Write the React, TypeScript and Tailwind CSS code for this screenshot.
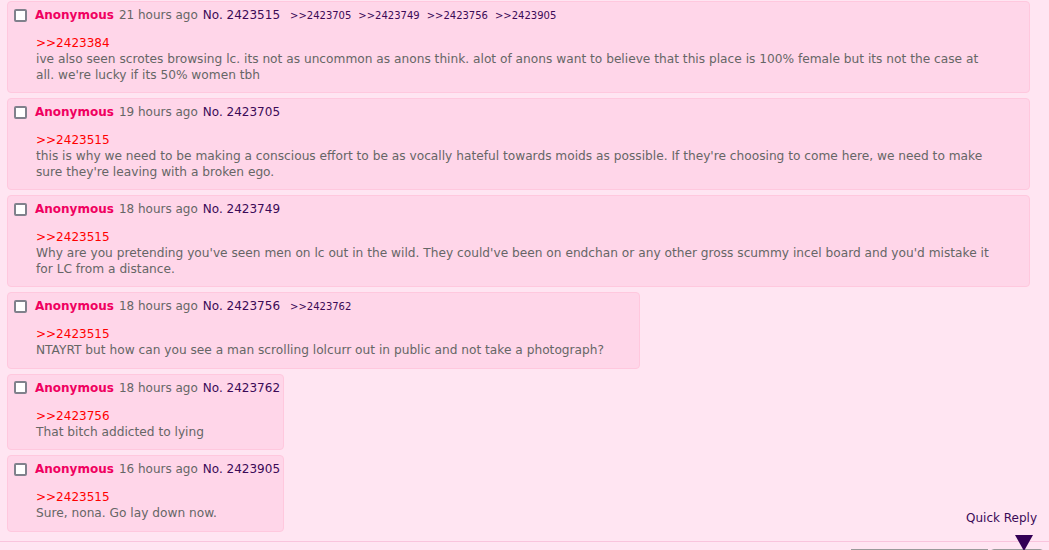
import React from "react";

type Post = {
  ago: string;
  no: string;
  replies: string[];
  quote: string;
  body: string;
};

const posts: Post[] = [
  {
    ago: "21 hours ago",
    no: "2423515",
    replies: ["2423705", "2423749", "2423756", "2423905"],
    quote: "2423384",
    body: "ive also seen scrotes browsing lc. its not as uncommon as anons think. alot of anons want to believe that this place is 100% female but its not the case at all. we're lucky if its 50% women tbh",
  },
  {
    ago: "19 hours ago",
    no: "2423705",
    replies: [],
    quote: "2423515",
    body: "this is why we need to be making a conscious effort to be as vocally hateful towards moids as possible. If they're choosing to come here, we need to make sure they're leaving with a broken ego.",
  },
  {
    ago: "18 hours ago",
    no: "2423749",
    replies: [],
    quote: "2423515",
    body: "Why are you pretending you've seen men on lc out in the wild. They could've been on endchan or any other gross scummy incel board and you'd mistake it for LC from a distance.",
  },
  {
    ago: "18 hours ago",
    no: "2423756",
    replies: ["2423762"],
    quote: "2423515",
    body: "NTAYRT but how can you see a man scrolling lolcurr out in public and not take a photograph?",
  },
  {
    ago: "18 hours ago",
    no: "2423762",
    replies: [],
    quote: "2423756",
    body: "That bitch addicted to lying",
  },
  {
    ago: "16 hours ago",
    no: "2423905",
    replies: [],
    quote: "2423515",
    body: "Sure, nona. Go lay down now.",
  },
];

function PostBox({ post }: { post: Post }) {
  return (
    <div className="inline-block max-w-[1023px] bg-[#ffd6e9] border border-[#ffc8de] rounded-[4px] pl-[6px] pr-[3px] pt-[3px] pb-[9px]">
      <div className="flex items-center h-[20px] whitespace-nowrap">
        <span className="w-[13px] h-[13px] bg-white border-2 border-[#80818c] rounded-[2px] shrink-0" />
        <span className="ml-[8px] font-bold text-[#f0005f]">Anonymous</span>
        <span className="ml-[5px] text-[#666666]">{post.ago}</span>
        <span className="ml-[5px] text-[#3b0a57]">No. {post.no}</span>
        {post.replies.map((r, i) => (
          <span
            key={r}
            className={`text-[10px] text-[#3b0a57] ${i === 0 ? "ml-[10px]" : "ml-[7px]"}`}
          >
            &gt;&gt;{r}
          </span>
        ))}
      </div>
      <div className="ml-[22px] mr-[32px] mt-[10px]">
        <div className="text-[#ff0000] leading-[17px]">&gt;&gt;{post.quote}</div>
        <div className="text-[#666666] text-[12.2px] leading-[15.5px]">{post.body}</div>
      </div>
    </div>
  );
}

export default function App() {
  const last = posts[posts.length - 1];
  return (
    <div className="relative h-[550px] overflow-hidden bg-[#ffe5f2] font-['DejaVu_Sans',Verdana,sans-serif] text-[12px]">
      <div className="flex flex-col gap-[5px] pl-[7px] pt-[1px]">
        {posts.slice(0, -1).map((p) => (
          <div key={p.no}>
            <PostBox post={p} />
          </div>
        ))}
        <div className="flex justify-between items-end">
          <PostBox post={last} />
          <span className="mr-[12px] mb-[5px] text-[#3b0a57]">Quick Reply</span>
        </div>
      </div>
      <div className="mt-[9px] border-t border-[#f9c4dd]" />
      <div className="flex justify-end gap-[2px] pr-[5px] mt-[7px]">
        <div className="w-[137px] h-[20px] border border-[#9a9a9a] bg-white" />
        <div className="w-[54px] h-[20px] border border-[#9a9a9a] rounded-t-[4px] bg-[#f2eef2]" />
      </div>
      <svg
        className="absolute left-[1015px] top-[535px]"
        width="18"
        height="16"
        viewBox="0 0 18 16"
      >
        <polygon points="0,0 18,0 9,16" fill="#330055" />
      </svg>
    </div>
  );
}
